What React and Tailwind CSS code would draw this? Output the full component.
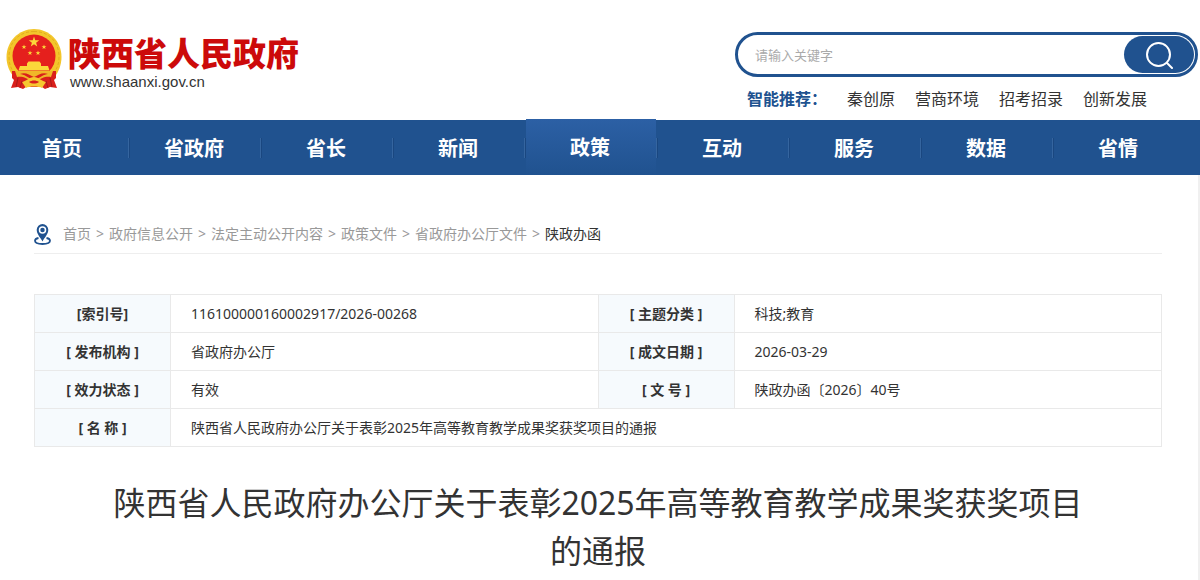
import { Fragment } from 'react';
import clsx from 'clsx';

const NAV = ['首页', '省政府', '省长', '新闻', '政策', '互动', '服务', '数据', '省情'];
const ACTIVE = '政策';

const HOT_WORDS = ['秦创原', '营商环境', '招考招录', '创新发展'];

const CRUMBS = ['首页', '政府信息公开', '法定主动公开内容', '政策文件', '省政府办公厅文件'];

const TITLE = '陕西省人民政府办公厅关于表彰2025年高等教育教学成果奖获奖项目的通报';

const META = [
  [['[索引号]', '116100000160002917/2026-00268'], ['[ 主题分类 ]', '科技;教育']],
  [['[ 发布机构 ]', '省政府办公厅'], ['[ 成文日期 ]', '2026-03-29']],
  [['[ 效力状态 ]', '有效'], ['[ 文 号 ]', '陕政办函〔2026〕40号']],
  [['[ 名 称 ]', TITLE]],
];

const STAR = '0,-1 .235,-.324 .951,-.309 .38,.124 .588,.809 0,.4 -.588,.809 -.38,.124 -.951,-.309 -.235,-.324';

function Emblem() {
  return (
    <svg viewBox="0 0 56 61" className="w-14 shrink-0" aria-hidden="true">
      <path d="M28 0C43 0 55.500 12 55.500 28c0 8-3 15-7 20H8C3.500 43 .5 36 .5 28 .5 12 13 0 28 0z" fill="#f3c62b" />
      <path d="M28 2.500C13 2.500 3 13 3 28c0 7 2 12 6 17M28 2.500c15 0 25 10.500 25 25.500 0 7-2 12-6 17" fill="none" stroke="#e3ad1d" strokeDasharray="3 2" />
      <circle cx="28" cy="27" r="21.500" fill="#e5201d" />
      <g fill="#fbd83a">
        <polygon points={STAR} transform="translate(28 13) scale(5.500)" />
        <polygon points={STAR} transform="translate(18 18) scale(2.600)" />
        <polygon points={STAR} transform="translate(38 18) scale(2.600)" />
        <polygon points={STAR} transform="translate(24 24) scale(2.600)" />
        <polygon points={STAR} transform="translate(32 24) scale(2.600)" />
        <path d="M22.500 32.500h11l1.500 2v2.500h7l1.500 4.500h-31L14 37h7v-2.500z" />
      </g>
      <path d="M6 42h44v7l-2 2 3 8-7-1-5 2-3-2H20l-3 2-5-2-7 1 3-8-2-2z" fill="#d9201b" />
      <path d="M9 42h38l-2 6c-6-1-9 1-17 5-8-4-11-6-17-5z" fill="#f0b728" />
      <path d="M14 45c6-2 9 1 14 3 5-2 8-5 14-3-4 0-8 4-14 6-6-2-10-6-14-6z" fill="#d9201b" />
      <path d="M16 53c5-1 7-5 12-5s7 4 12 5l-4 6c-3-2-13-2-16 0z" fill="#f6c72f" />
      <path d="M23 53c3-2 7-2 10 0-3 2-7 2-10 0z" fill="#d9201b" />
      <path d="M12 49l-2 9M16 52l-2 7M44 49l2 9M40 52l2 7" stroke="#a91a18" />
    </svg>
  );
}

function Header() {
  return (
    <header className="flex h-[120px] items-start justify-between bg-white pl-1.5">
      <a href="#" className="flex pt-[29px]">
        <Emblem />
        <span className="flex flex-col pl-1.5 pt-1 font-['Liberation_Sans','Noto_Sans_CJK_SC',sans-serif]">
          <span className="text-[33px] font-black leading-[44px] text-[#cc0a0a]">陕西省人民政府</span>
          <span className="pl-0.5 text-[15px] leading-[10px] text-[#333]">www.shaanxi.gov.cn</span>
        </span>
      </a>
      <div className="mr-0.5 w-[463px] pt-8">
        <form className="flex h-[45px] rounded-full border-3 border-[#20528f] p-px" onSubmit={(e) => e.preventDefault()}>
          <input
            type="text"
            aria-label="搜索"
            placeholder="请输入关键字"
            className="min-w-0 flex-1 rounded-full bg-transparent pl-4 pt-0.5 text-[13px] text-[#333] outline-none placeholder:text-[#aaa]"
          />
          <button type="submit" aria-label="搜索" className="flex w-[70px] items-center justify-center rounded-full bg-[#20528f]">
            <svg viewBox="0 0 28 28" className="size-7" fill="none" stroke="#fff" strokeWidth="2" strokeLinecap="round">
              <circle cx="13.500" cy="13.500" r="11.500" />
              <path d="M22 22l5 5" />
            </svg>
          </button>
        </form>
        <div className="flex gap-5 pl-3 pt-2.5 text-[16px] leading-6 text-[#333]">
          <strong className="font-bold text-[#20528f]">智能推荐：</strong>
          {HOT_WORDS.map((w) => (
            <a key={w} href="#">{w}</a>
          ))}
        </div>
      </div>
    </header>
  );
}

function Nav() {
  return (
    <nav className="bg-[#20528f]">
      <ul className="-ml-1 flex h-[55px] items-center">
        {NAV.map((item) => (
          <li key={item} className="flex w-[132px] shrink-0 items-center">
            <span className="h-5 w-0.5 border-l border-[#35659f] bg-[#1a4780]" />
            <a
              href="#"
              className={clsx(
                'flex-1 pr-0.5 text-center text-[20px] font-bold text-white',
                item === ACTIVE
                  ? '-mt-px h-14 bg-linear-to-b from-[#2c60a5] to-[#20528f] leading-[58px]'
                  : 'h-[55px] leading-[58px]'
              )}
            >
              {item}
            </a>
          </li>
        ))}
      </ul>
    </nav>
  );
}

function Breadcrumb() {
  return (
    <div className="flex h-10 items-center border-b border-[#eee] text-[14px] text-[#999]">
      <svg viewBox="0 0 17 21" className="mr-3 mt-0.5 w-[17px]" fill="none" aria-hidden="true">
        <path d="M4.500 14C2 14.500 1 15.700 1 16.800 1 18.700 4 20 8.500 20s7.500-1.300 7.500-3.200c0-1.100-1-2.300-3.500-2.800" stroke="#20528f" strokeWidth="1.800" />
        <path d="M8.500 0a5.800 5.800 0 0 0-5.800 5.800C2.700 10 6 13 8.500 17.500 11 13 14.300 10 14.300 5.800A5.800 5.800 0 0 0 8.500 0z" fill="#20528f" />
        <circle cx="8.500" cy="6" r="3" fill="#20528f" stroke="#fff" strokeWidth="1.500" />
      </svg>
      {CRUMBS.map((c) => (
        <Fragment key={c}>
          <a href="#">{c}</a>
          <span className="w-[18px] text-center">&gt;</span>
        </Fragment>
      ))}
      <a href="#" className="text-[#333]">陕政办函</a>
    </div>
  );
}

function MetaTable() {
  return (
    <table className="mt-10 w-full table-fixed border-collapse text-[14px] text-[#333]">
      <colgroup>
        <col className="w-[136px]" />
        <col />
        <col className="w-[136px]" />
        <col />
      </colgroup>
      <tbody>
        {META.map((row, i) => (
          <tr key={i} className="h-[38px]">
            {row.map(([label, value]) => (
              <Fragment key={label}>
                <th scope="row" className="border border-[#e9e9e9] bg-[#f6fafd] text-center font-bold">{label}</th>
                <td colSpan={row.length === 1 ? 3 : 1} className="border border-[#e9e9e9] pl-5">{value}</td>
              </Fragment>
            ))}
          </tr>
        ))}
      </tbody>
    </table>
  );
}

export default function App() {
  return (
    <div className="flex min-h-screen flex-col bg-[#f0f0f0] font-['Noto_Sans','Noto_Sans_CJK_SC',sans-serif]">
      <Header />
      <Nav />
      <main className="mr-0.5 flex-1 bg-white pl-[34px] pr-9 pt-[39px]">
        <Breadcrumb />
        <MetaTable />
        <h1 className="mt-8 px-[70px] text-center text-[32px] leading-[48px] text-[#333]">{TITLE}</h1>
      </main>
    </div>
  );
}
